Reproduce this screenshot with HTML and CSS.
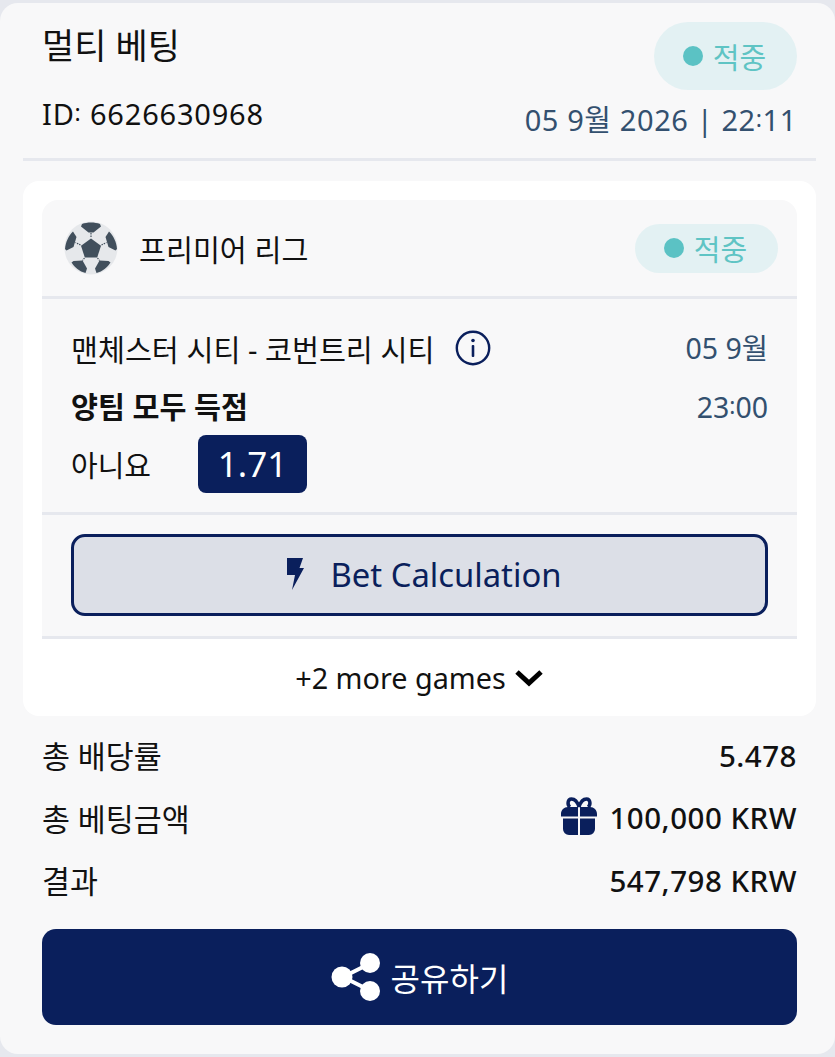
FILE: index.html
```html
<!DOCTYPE html>
<html lang="ko">
<head>
    <meta charset="UTF-8">
    <meta name="viewport" content="width=device-width, initial-scale=1.0">
    <title>멀티 베팅</title>
    <link rel="stylesheet" href="styles.css">
</head>
<body>
    <main class="bet-card">
        <header class="bet-head">
            <div class="head-left">
                <h1>멀티 베팅</h1>
                <p class="bet-id">ID<span class="colon">:</span> 6626630968</p>
            </div>
            <div class="head-right">
                <span class="status status-large"><i class="dot"></i>적중</span>
                <p class="bet-date">05 9월 2026 | 22<span class="colon">:</span>11</p>
            </div>
        </header>

        <section class="games">
            <div class="game">
                <div class="league">
                    <svg class="ball" viewBox="0 0 54 54">
                        <circle cx="27" cy="27" r="26.5" fill="#e6e8eb"/>
                        <path d="M27 17.500l10 7.200-3.800 11.800H20.800L17 24.700z" fill="#414f5c"/>
                        <path d="M18 3c5-2 13-2 18 0l1 2.500-7.500 6h-5L17 5.500z" fill="#414f5c"/>
                        <path d="M45 10.500c4 4 7.500 10 8 17.500l-1.500 1.500-7-3.500L41.500 16z" fill="#414f5c"/>
                        <path d="M9 10.500C5 14.500 1.500 20.500 1 28l1.500 1.500 7-3.500L12.500 16z" fill="#414f5c"/>
                        <path d="M9.500 40l9-.5 4.500 8-1.500 4.500c-6-1.500-11-5.500-14-10.500z" fill="#414f5c"/>
                        <path d="M44.500 40l-9-.5-4.500 8 1.500 4.500c6-1.500 11-5.500 14-10.500z" fill="#414f5c"/>
                        <path d="M27 12v5M37.500 24l5-2.500M33.500 37l2 2.500M20.500 37l-2 2.500M16.500 24l-5-2.500" stroke="#414f5c" stroke-width="1.200" stroke-dasharray="1.500 1"/>
                    </svg>
                    <span class="league-name">프리미어 리그</span>
                    <span class="status"><i class="dot"></i>적중</span>
                </div>

                <div class="match">
                    <div class="match-info">
                        <div class="match-teams">
                            맨체스터 시티 - 코번트리 시티
                            <svg class="info-icon" viewBox="0 0 36 36">
                                <circle cx="18" cy="18" r="16.200" fill="none" stroke="#0a1f5c" stroke-width="2.400"/>
                                <circle cx="18" cy="10.500" r="1.800" fill="#0a1f5c"/>
                                <rect x="16.700" y="15" width="2.600" height="12" rx="1" fill="#0a1f5c"/>
                            </svg>
                        </div>
                        <div class="market">양팀 모두 득점</div>
                        <div class="pick">
                            <span class="pick-name">아니요</span>
                            <span class="odds">1.71</span>
                        </div>
                    </div>
                    <div class="match-time">
                        <span>05 9월</span>
                        <span>23<span class="colon">:</span>00</span>
                    </div>
                </div>

                <div class="calc-wrap">
                    <button class="calc-btn">
                        <svg class="bolt" viewBox="0 0 18 32">
                            <path d="M1 0h16l-3.500 10H18L6 32l3-15H1z" fill="#0a1f5c"/>
                        </svg>
                        Bet Calculation
                    </button>
                </div>
            </div>

            <div class="more-games">
                +2 more games
                <svg class="chevron" viewBox="0 0 30 18">
                    <path d="M3 3l12 11L27 3" fill="none" stroke="#000" stroke-width="5"/>
                </svg>
            </div>
        </section>

        <section class="summary">
            <div class="summary-row">
                <span>총 배당률</span>
                <strong>5.478</strong>
            </div>
            <div class="summary-row">
                <span>총 베팅금액</span>
                <strong class="amount">
                    <svg class="gift" viewBox="0 0 36 38">
                        <path d="M18 10C16.500 5 13.500 2 10.500 2 6.500 2 6 8 9 10M18 10c1.500-5 4.500-8 7.500-8 4 0 4.500 6 1.500 8" fill="none" stroke="#0a1f5c" stroke-width="3.500"/>
                        <path d="M7 10h10v9.500H0V17c0-4 3-7 7-7zM19 10h10c4 0 7 3 7 7v2.500H19zM2 21.500h15V38H8a6 6 0 0 1-6-6zM19 21.500h15V32a6 6 0 0 1-6 6h-9z" fill="#0a1f5c"/>
                    </svg>
                    100,000 KRW
                </strong>
            </div>
            <div class="summary-row">
                <span>결과</span>
                <strong>547,798 KRW</strong>
            </div>
        </section>

        <button class="share-btn">
            <svg class="share" viewBox="0 0 50 50">
                <path d="M38 12L12 25l26 13" fill="none" stroke="#fff" stroke-width="4"/>
                <circle cx="39" cy="11" r="10" fill="#fff"/>
                <circle cx="11" cy="25" r="10.500" fill="#fff"/>
                <circle cx="39" cy="39" r="10" fill="#fff"/>
            </svg>
            공유하기
        </button>
    </main>
</body>
</html>
```

FILE: styles.css
```css
* {
    box-sizing: border-box;
}

html, body {
    height: 100%;
}

body {
    margin: 0;
    padding: 3px 0;
    overflow: hidden;
    background: #e6e8ee;
    color: #111;
    font-family: "Noto Sans", "Noto Sans CJK KR", sans-serif;
}

p, h1 {
    margin: 0;
    font-weight: 400;
}

.bet-card {
    height: 1051px;
    padding: 0 19px 0 23px;
    background: #f8f8f9;
    border-radius: 18px;
}

.colon {
    font-size: 0.8em;
    vertical-align: 4px;
}

/* header */
.bet-head {
    display: flex;
    justify-content: space-between;
    height: 158px;
    padding: 0 19px;
    border-bottom: 3px solid #e6e8ee;
}

.head-left {
    padding-top: 18px;
}

.head-left h1 {
    font-size: 35px;
    line-height: 50px;
}

.bet-id {
    margin-top: 19px;
    font-size: 29px;
    line-height: 44px;
    letter-spacing: 0.8px;
}

.head-right {
    display: flex;
    flex-direction: column;
    align-items: flex-end;
    padding-top: 19px;
}

.bet-date {
    margin-top: 6px;
    font-size: 29px;
    line-height: 44px;
    letter-spacing: 0.6px;
    color: #33506f;
}

.status {
    display: inline-flex;
    align-items: center;
    justify-content: center;
    gap: 10px;
    width: 143px;
    height: 49px;
    padding-right: 2px;
    font-size: 29px;
    color: #5fc4c4;
    background: #e3f1f3;
    border-radius: 25px;
}

.status-large {
    height: 68px;
    border-radius: 34px;
}

.dot {
    width: 20px;
    height: 20px;
    background: #5bc2c4;
    border-radius: 50%;
}

/* games panel */
.games {
    margin-top: 20px;
    padding: 19px 19px 0;
    height: 535px;
    background: #fff;
    border-radius: 16px;
}

.game {
    height: 439px;
    background: #f8f8f9;
    border-radius: 16px 16px 0 0;
    border-bottom: 3px solid #e6e8ee;
}

.league {
    display: flex;
    align-items: center;
    height: 99px;
    padding: 0 19px 0 22px;
    border-bottom: 3px solid #e6e8ee;
}

.ball {
    width: 54px;
    height: 54px;
}

.league-name {
    flex: 1;
    margin-left: 21px;
    font-size: 29.300px;
}

.match {
    display: flex;
    justify-content: space-between;
    height: 216px;
    padding: 26px 29px 0;
    border-bottom: 3px solid #e6e8ee;
}

.match-teams {
    display: flex;
    align-items: center;
    gap: 21px;
    height: 46px;
    font-size: 29.300px;
    white-space: nowrap;
}

.info-icon {
    width: 36px;
    height: 36px;
}

.market {
    margin-top: 13px;
    font-size: 29.300px;
    line-height: 46px;
    font-weight: 700;
}

.pick {
    display: flex;
    align-items: center;
    gap: 47px;
    margin-top: 5px;
    font-size: 29px;
}

.odds {
    width: 109px;
    height: 58px;
    font-size: 35px;
    line-height: 58px;
    text-align: center;
    color: #fff;
    background: #0a1f5c;
    border-radius: 8px;
}

.match-time {
    display: flex;
    flex-direction: column;
    align-items: flex-end;
    gap: 12px;
    font-size: 28.500px;
    line-height: 46px;
    color: #33506f;
}

.calc-wrap {
    padding: 19px 29px 0;
}

.calc-btn {
    display: flex;
    align-items: center;
    justify-content: center;
    gap: 26px;
    width: 100%;
    height: 82px;
    padding: 0 0 2px 9px;
    font-family: inherit;
    font-size: 32.800px;
    color: #0a1f5c;
    background: #dcdfe7;
    border: 3px solid #0a1f5c;
    border-radius: 14px;
}

.bolt {
    width: 18px;
    height: 32px;
}

.more-games {
    display: flex;
    align-items: center;
    justify-content: center;
    gap: 8px;
    height: 77px;
    font-size: 28.800px;
}

.chevron {
    width: 30px;
    height: 18px;
}

/* totals */
.summary {
    padding: 8px 19px 0;
}

.summary-row {
    display: flex;
    align-items: center;
    justify-content: space-between;
    height: 62.500px;
    font-size: 30.400px;
}

.summary-row strong {
    font-size: 29.500px;
    font-weight: 500;
    letter-spacing: 0.5px;
}

.amount {
    display: flex;
    align-items: center;
    gap: 12px;
}

.gift {
    width: 36px;
    height: 38px;
    margin-top: -4px;
}

.share-btn {
    display: flex;
    align-items: center;
    justify-content: center;
    gap: 10px;
    width: 755px;
    height: 96px;
    margin: 17px 19px 0;
    font-family: inherit;
    font-size: 32px;
    color: #fff;
    background: #0a1f5c;
    border: none;
    border-radius: 14px;
}

.share {
    width: 50px;
    height: 50px;
}
```
